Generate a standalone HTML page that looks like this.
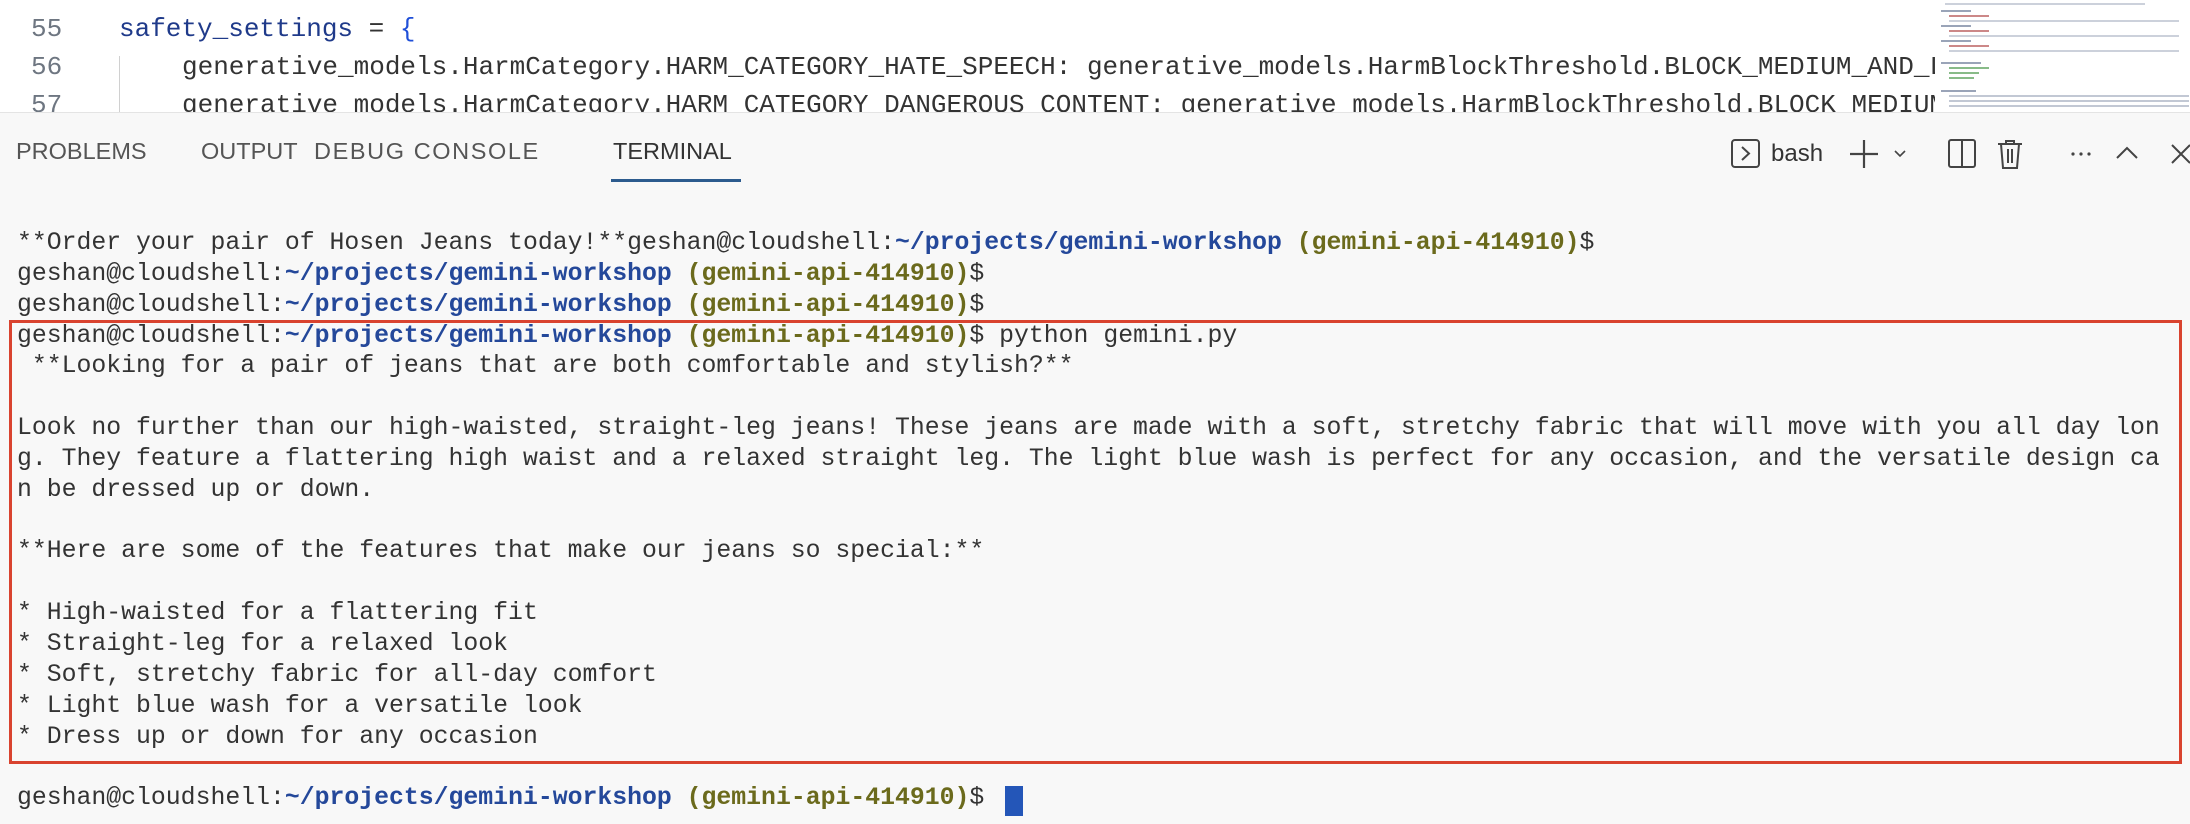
<!DOCTYPE html>
<html><head><meta charset="utf-8"><style>
*{margin:0;padding:0;box-sizing:border-box}
body{width:2190px;height:824px;overflow:hidden;background:#f8f8f8;position:relative;font-family:"Liberation Sans",sans-serif}
#ed{position:absolute;left:0;top:0;width:2190px;height:113px;background:#fff;overflow:hidden;border-bottom:1px solid #e4e4e4}
.ln{position:absolute;left:31px;font:26px "Liberation Mono",monospace;color:#6e7681}
.code{position:absolute;font:26px "Liberation Mono",monospace;color:#333;white-space:pre}
.tab{position:absolute;top:138px;font-size:23.5px;color:#555;white-space:nowrap}
#term{position:absolute;left:17px;top:228px;font:24.8px/30.85px "Liberation Mono",monospace;color:#333;white-space:pre}
.b{color:#24489a;font-weight:bold}
.o{color:#6b6a1c;font-weight:bold}
#mm{position:absolute;left:1935px;top:0;width:255px;height:113px;background:#fff}
#mm div{position:absolute;height:2px;background:#9aa4b8}
</style></head><body>
<div id="ed">
<div class="ln" style="top:14px">55</div>
<div class="ln" style="top:52px">56</div>
<div class="ln" style="top:90px">57</div>
<div style="position:absolute;left:119px;top:56px;width:1px;height:60px;background:#d0d0d0"></div>
<div class="code" style="left:119px;top:14px"><span style="color:#1f3a8a">safety_settings</span> = <span style="color:#1f4fd8">{</span></div>
<div class="code" style="left:182px;top:52px">generative_models.HarmCategory.HARM_CATEGORY_HATE_SPEECH: generative_models.HarmBlockThreshold.BLOCK_MEDIUM_AND_LOW_ABOVE,</div>
<div class="code" style="left:182px;top:90px">generative_models.HarmCategory.HARM_CATEGORY_DANGEROUS_CONTENT: generative_models.HarmBlockThreshold.BLOCK_MEDIUM_AND_ABOVE,</div>
<div id="mm">
<div style="left:10px;top:3px;width:200px;opacity:.5"></div>
<div style="left:6px;top:10px;width:30px"></div><div style="left:14px;top:15px;width:40px;background:#c88"></div><div style="left:14px;top:20px;width:230px;opacity:.5"></div>
<div style="left:6px;top:25px;width:30px"></div><div style="left:14px;top:30px;width:40px;background:#c88"></div><div style="left:14px;top:35px;width:230px;opacity:.5"></div>
<div style="left:6px;top:40px;width:30px"></div><div style="left:14px;top:45px;width:40px;background:#c88"></div><div style="left:14px;top:50px;width:230px;opacity:.5"></div>
<div style="left:6px;top:62px;width:40px"></div><div style="left:14px;top:67px;width:40px;background:#8b8"></div><div style="left:14px;top:72px;width:30px;background:#8b8"></div><div style="left:14px;top:77px;width:25px;background:#8b8"></div>
<div style="left:6px;top:90px;width:35px"></div><div style="left:14px;top:95px;width:240px;opacity:.6"></div><div style="left:14px;top:100px;width:240px;opacity:.6"></div><div style="left:14px;top:105px;width:240px;opacity:.6"></div>
</div>
</div>
<div class="tab" style="left:16px">PROBLEMS</div>
<div class="tab" style="left:201px">OUTPUT</div>
<div class="tab" style="left:314px;letter-spacing:1.6px">DEBUG CONSOLE</div>
<div class="tab" style="left:613px;color:#333">TERMINAL</div>
<div style="position:absolute;left:611px;top:179px;width:130px;height:3px;background:#2c5b8e"></div>
<svg style="position:absolute;left:1725px;top:130px" width="465" height="45" viewBox="0 0 465 45" fill="none" stroke="#444" stroke-width="2">
<rect x="7" y="10" width="27" height="27" rx="3"/><path d="M17 17l7 6.5-7 6.5"/>
<path d="M139 10v28M125 24h28" stroke-width="2.2"/><path d="M170 21l5 5 5-5" stroke-width="1.6"/>
<rect x="224" y="10" width="26" height="27" rx="2"/><path d="M237 10v27"/>
<path d="M273 14h24M281 14v-3h8v3M276 14l2 24h14l2-24M283 19v14M287 19v14"/>
<circle cx="348" cy="24" r="1.6" fill="#444" stroke="none"/><circle cx="356" cy="24" r="1.6" fill="#444" stroke="none"/><circle cx="364" cy="24" r="1.6" fill="#444" stroke="none"/>
<path d="M392 28l10-10 10 10"/>
<path d="M447 15l18 18M465 15l-18 18"/>
</svg>
<div style="position:absolute;left:1771px;top:140px;font-size:24px;color:#333">bash</div>
<div id="term">**Order your pair of Hosen Jeans today!**geshan@cloudshell:<span class="b">~/projects/gemini-workshop</span> <span class="o">(gemini-api-414910)</span>$
geshan@cloudshell:<span class="b">~/projects/gemini-workshop</span> <span class="o">(gemini-api-414910)</span>$
geshan@cloudshell:<span class="b">~/projects/gemini-workshop</span> <span class="o">(gemini-api-414910)</span>$
geshan@cloudshell:<span class="b">~/projects/gemini-workshop</span> <span class="o">(gemini-api-414910)</span>$ python gemini.py
 **Looking for a pair of jeans that are both comfortable and stylish?**

Look no further than our high-waisted, straight-leg jeans! These jeans are made with a soft, stretchy fabric that will move with you all day lon
g. They feature a flattering high waist and a relaxed straight leg. The light blue wash is perfect for any occasion, and the versatile design ca
n be dressed up or down.

**Here are some of the features that make our jeans so special:**

* High-waisted for a flattering fit
* Straight-leg for a relaxed look
* Soft, stretchy fabric for all-day comfort
* Light blue wash for a versatile look
* Dress up or down for any occasion

geshan@cloudshell:<span class="b">~/projects/gemini-workshop</span> <span class="o">(gemini-api-414910)</span>$ </div>
<div style="position:absolute;left:1005px;top:786px;width:18px;height:30px;background:#2456b8"></div>
<div style="position:absolute;left:9px;top:320px;width:2173px;height:444px;border:3px solid #d9432f"></div>
</body></html>
